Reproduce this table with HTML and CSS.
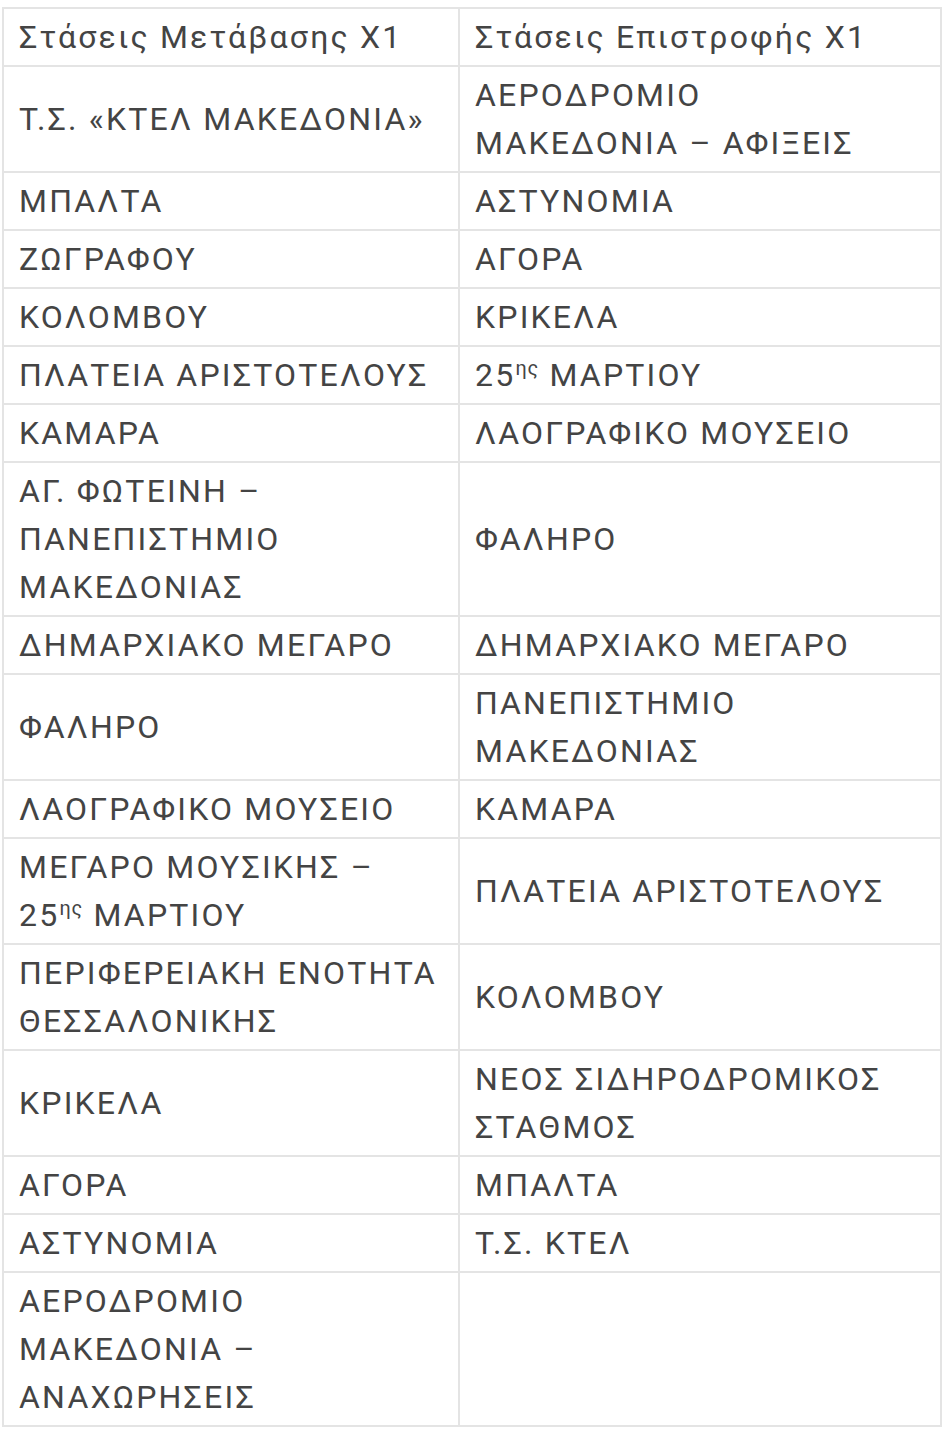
FILE: index.html
```html
<!DOCTYPE html>
<html lang="el">
<head>
<meta charset="utf-8">
<title>Στάσεις Χ1</title>
<link rel="stylesheet" href="styles.css">
</head>
<body>
<table class="stops">
  <colgroup><col class="c1"><col class="c2"></colgroup>
  <tbody>
    <tr><td>Στάσεις Μετάβασης Χ1</td><td>Στάσεις Επιστροφής Χ1</td></tr>
    <tr><td>Τ.Σ. «ΚΤΕΛ ΜΑΚΕΔΟΝΙΑ»</td><td>ΑΕΡΟΔΡΟΜΙΟ<br>ΜΑΚΕΔΟΝΙΑ – ΑΦΙΞΕΙΣ</td></tr>
    <tr><td>ΜΠΑΛΤΑ</td><td>ΑΣΤΥΝΟΜΙΑ</td></tr>
    <tr><td>ΖΩΓΡΑΦΟΥ</td><td>ΑΓΟΡΑ</td></tr>
    <tr><td>ΚΟΛΟΜΒΟΥ</td><td>ΚΡΙΚΕΛΑ</td></tr>
    <tr><td>ΠΛΑΤΕΙΑ ΑΡΙΣΤΟΤΕΛΟΥΣ</td><td>25<sup>ης</sup> ΜΑΡΤΙΟΥ</td></tr>
    <tr><td>ΚΑΜΑΡΑ</td><td>ΛΑΟΓΡΑΦΙΚΟ ΜΟΥΣΕΙΟ</td></tr>
    <tr><td>ΑΓ. ΦΩΤΕΙΝΗ –<br>ΠΑΝΕΠΙΣΤΗΜΙΟ<br>ΜΑΚΕΔΟΝΙΑΣ</td><td>ΦΑΛΗΡΟ</td></tr>
    <tr><td>ΔΗΜΑΡΧΙΑΚΟ ΜΕΓΑΡΟ</td><td>ΔΗΜΑΡΧΙΑΚΟ ΜΕΓΑΡΟ</td></tr>
    <tr><td>ΦΑΛΗΡΟ</td><td>ΠΑΝΕΠΙΣΤΗΜΙΟ<br>ΜΑΚΕΔΟΝΙΑΣ</td></tr>
    <tr><td>ΛΑΟΓΡΑΦΙΚΟ ΜΟΥΣΕΙΟ</td><td>ΚΑΜΑΡΑ</td></tr>
    <tr><td>ΜΕΓΑΡΟ ΜΟΥΣΙΚΗΣ –<br>25<sup>ης</sup> ΜΑΡΤΙΟΥ</td><td>ΠΛΑΤΕΙΑ ΑΡΙΣΤΟΤΕΛΟΥΣ</td></tr>
    <tr><td>ΠΕΡΙΦΕΡΕΙΑΚΗ ΕΝΟΤΗΤΑ<br>ΘΕΣΣΑΛΟΝΙΚΗΣ</td><td>ΚΟΛΟΜΒΟΥ</td></tr>
    <tr><td>ΚΡΙΚΕΛΑ</td><td>ΝΕΟΣ ΣΙΔΗΡΟΔΡΟΜΙΚΟΣ<br>ΣΤΑΘΜΟΣ</td></tr>
    <tr><td>ΑΓΟΡΑ</td><td>ΜΠΑΛΤΑ</td></tr>
    <tr><td>ΑΣΤΥΝΟΜΙΑ</td><td>Τ.Σ. ΚΤΕΛ</td></tr>
    <tr><td>ΑΕΡΟΔΡΟΜΙΟ<br>ΜΑΚΕΔΟΝΙΑ –<br>ΑΝΑΧΩΡΗΣΕΙΣ</td><td></td></tr>
  </tbody>
</table>
</body>
</html>
```
FILE: styles.css
```css
html, body {
  margin: 0;
  padding: 0;
  background: #ffffff;
}
body {
  padding: 7px 2px 0 2px;
  font-family: Roboto, "Noto Sans", sans-serif;
  color: #444444;
}
.stops {
  border-collapse: collapse;
  width: 938px;
  table-layout: fixed;
}
.stops .c1 { width: 456px; }
.stops .c2 { width: 482px; }
.stops td {
  border: 2px solid #e4e4e4;
  padding: 4px 16px 4px 15px;
  font-size: 32px;
  line-height: 48px;
  letter-spacing: 2.2px;
  vertical-align: middle;
  text-align: left;
  white-space: nowrap;
}
.stops sup {
  font-size: 0.62em;
  line-height: 0;
  letter-spacing: 1px;
  vertical-align: 0.55em;
}
```
